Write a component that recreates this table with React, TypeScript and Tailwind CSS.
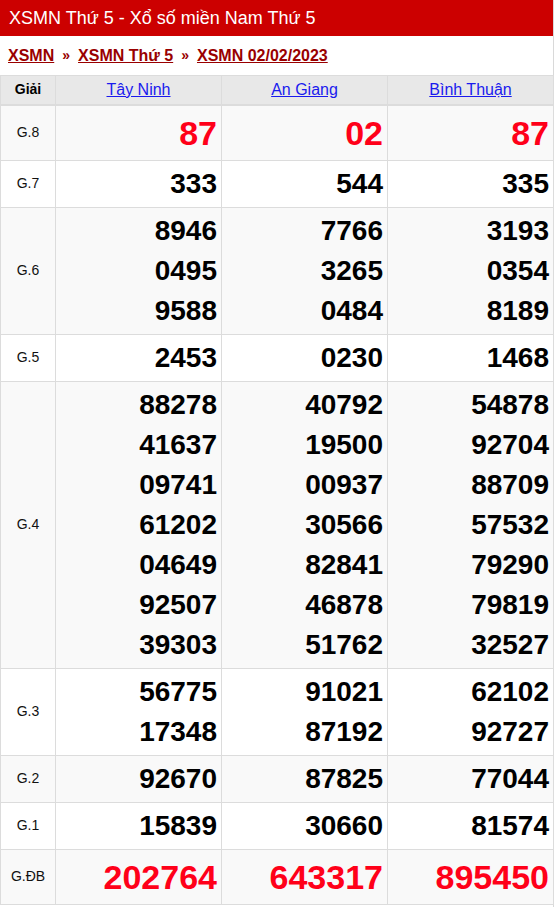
const provinces = ["Tây Ninh", "An Giang", "Bình Thuận"];

type Prize = { label: string; values: string[][]; special?: boolean };

const prizes: Prize[] = [
  { label: "G.8", values: [["87"], ["02"], ["87"]], special: true },
  { label: "G.7", values: [["333"], ["544"], ["335"]] },
  {
    label: "G.6",
    values: [
      ["8946", "0495", "9588"],
      ["7766", "3265", "0484"],
      ["3193", "0354", "8189"],
    ],
  },
  { label: "G.5", values: [["2453"], ["0230"], ["1468"]] },
  {
    label: "G.4",
    values: [
      ["88278", "41637", "09741", "61202", "04649", "92507", "39303"],
      ["40792", "19500", "00937", "30566", "82841", "46878", "51762"],
      ["54878", "92704", "88709", "57532", "79290", "79819", "32527"],
    ],
  },
  {
    label: "G.3",
    values: [
      ["56775", "17348"],
      ["91021", "87192"],
      ["62102", "92727"],
    ],
  },
  { label: "G.2", values: [["92670"], ["87825"], ["77044"]] },
  { label: "G.1", values: [["15839"], ["30660"], ["81574"]] },
  { label: "G.ĐB", values: [["202764"], ["643317"], ["895450"]], special: true },
];

export default function App() {
  return (
    <div className="w-[554px] min-h-[907px] bg-white border-r border-[#d9d9d9] font-['Liberation_Sans',Arial,sans-serif]">
      {/* Title bar */}
      <div className="h-[36px] bg-[#cc0000] flex items-center px-[9px]">
        <h1 className="text-white text-[18px] leading-none">
          XSMN Thứ 5 - Xổ số miền Nam Thứ 5
        </h1>
      </div>

      {/* Breadcrumb */}
      <div className="h-[39px] flex items-center gap-[8px] px-[8px] text-[16px] font-bold text-[#990000]">
        <a href="#" className="underline">XSMN</a>
        <span className="text-[14px]">»</span>
        <a href="#" className="underline">XSMN Thứ 5</a>
        <span className="text-[14px]">»</span>
        <a href="#" className="underline">XSMN 02/02/2023</a>
      </div>

      {/* Results table */}
      <table className="w-[553px] border-collapse table-fixed">
        <colgroup>
          <col className="w-[55px]" />
          <col className="w-[166px]" />
          <col className="w-[166px]" />
          <col className="w-[166px]" />
        </colgroup>
        <thead>
          <tr className="bg-[#e8e8e8] h-[29px] border-b-2 border-[#dcdcdc]">
            <th className="border border-[#dcdcdc] text-[14px] font-bold text-black">
              Giải
            </th>
            {provinces.map((p) => (
              <th
                key={p}
                className="border border-[#dcdcdc] text-[16px] font-normal"
              >
                <a href="#" className="text-[#1a1aee] underline">
                  {p}
                </a>
              </th>
            ))}
          </tr>
        </thead>
        <tbody>
          {prizes.map((prize, i) => (
            <tr
              key={prize.label}
              className={i % 2 === 0 ? "bg-[#f9f9f9]" : "bg-white"}
            >
              <td className="border border-[#dcdcdc] text-center text-[14px] text-[#111]">
                {prize.label}
              </td>
              {prize.values.map((col, j) => (
                <td
                  key={j}
                  className="border border-[#dcdcdc] py-[3px] pr-[4px] text-right align-middle"
                >
                  {col.map((v, k) => (
                    <div
                      key={k}
                      className={
                        prize.special
                          ? "text-[34px] leading-[48px] font-bold text-[#ff0019]"
                          : "text-[28px] leading-[40px] font-bold text-black"
                      }
                    >
                      {v}
                    </div>
                  ))}
                </td>
              ))}
            </tr>
          ))}
        </tbody>
      </table>
    </div>
  );
}
